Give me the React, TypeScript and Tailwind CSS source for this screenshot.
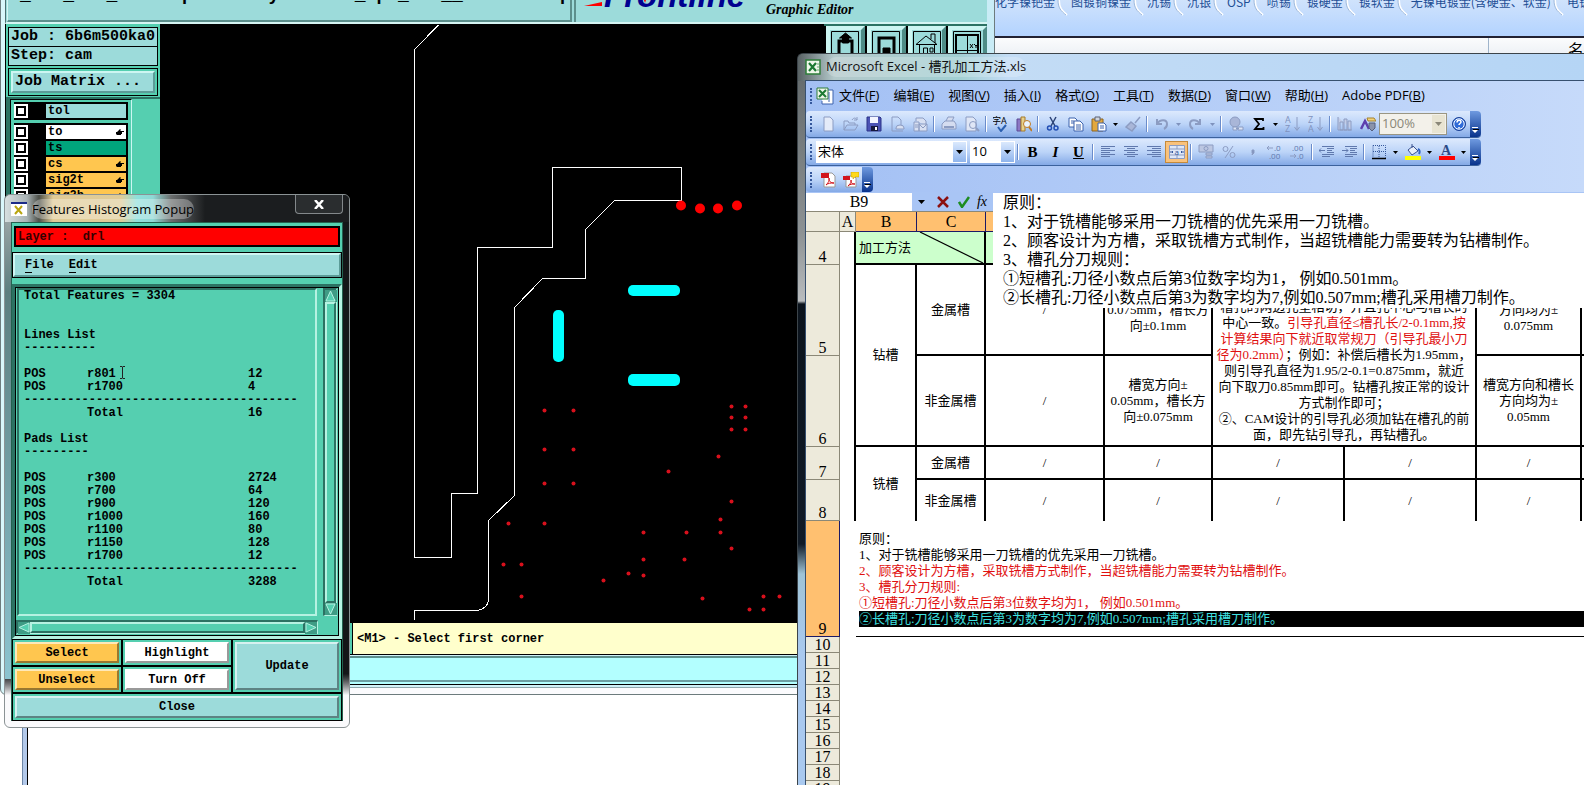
import React from "react";

type Layer = { name: string; color: string; hand: boolean };

const layers: Layer[] = [
  { name: "to", color: "bg-white", hand: true },
  { name: "ts", color: "bg-[#00a57c]", hand: false },
  { name: "cs", color: "bg-[#ffc64f]", hand: true },
  { name: "sig2t", color: "bg-[#ffc64f]", hand: true },
  { name: "sig2b", color: "bg-[#ffc64f]", hand: true },
];

const linesList = [
  ["r801", "12"],
  ["r1700", "4"],
];

const padsList = [
  ["r300", "2724"],
  ["r700", "64"],
  ["r900", "120"],
  ["r1000", "160"],
  ["r1100", "80"],
  ["r1150", "128"],
  ["r1700", "12"],
];

// drill hits, board coordinates
const holes = [
  [544, 410], [573, 410], [544, 449], [573, 449], [544, 483], [573, 483],
  [508, 523], [544, 523], [731, 406], [745, 406], [731, 417], [745, 417],
  [731, 429], [745, 429], [718, 456], [668, 471], [731, 501], [720, 519],
  [643, 532], [686, 532], [720, 532], [731, 548], [643, 559], [684, 559],
  [503, 564], [521, 564], [628, 573], [643, 575], [603, 580], [521, 596],
  [702, 598], [763, 596], [779, 596], [749, 609], [763, 609],
];

const sheetTabs = [
  "化学镍钯金", "图镀铜镍金", "沉锡", "沉银", "OSP", "喷锡", "镀硬金", "镀软金",
  "无镍电镀金(含硬金、软金)", "电镀",
];

const menus = [
  ["文件", "F"], ["编辑", "E"], ["视图", "V"], ["插入", "I"], ["格式", "O"],
  ["工具", "T"], ["数据", "D"], ["窗口", "W"], ["帮助", "H"], ["Adobe PDF", "B"],
];

const bevel =
  "border-2 border-t-[#cdf6f2] border-l-[#cdf6f2] border-b-[#5c9c98] border-r-[#5c9c98]";
const monoFont = "font-['Liberation_Mono',monospace]";
const songFont = "font-['Liberation_Serif','Noto_Sans_CJK_SC',serif]";
const uiFont = "font-['Open_Sans','Noto_Sans_CJK_SC',sans-serif]";

/* ---------- CAM editor ---------- */

const Hand = () => (
  <svg width="8" height="8" viewBox="0 0 8 8" className="mr-[2px]">
    <path d="M0 4h1l3-3 1 1-1 1h4v1H6v2H5v1H1L0 6z" fill="#000" />
  </svg>
);

const LayerRow: React.FC<{ layer: Layer }> = ({ layer }) => (
  <div className="flex h-4 bg-black pb-[2px]">
    <label className="flex w-[14px] items-center justify-center bg-white">
      <input
        type="checkbox"
        aria-label={layer.name}
        className="size-[10px] appearance-none border-2 border-black bg-white"
      />
    </label>
    <div className="w-[18px]" />
    <div className={`flex flex-1 items-center justify-between pl-[2px] ${layer.color}`}>
      <span className="text-xs leading-[14px] font-bold">{layer.name}</span>
      {layer.hand && <Hand />}
    </div>
  </div>
);

const Board = () => (
  <svg viewBox="160 24 664 599" className="h-full w-full bg-black" preserveAspectRatio="xMinYMin slice">
    <g fill="none" stroke="#fff" strokeWidth="1" shapeRendering="crispEdges">
      <path d="M438.5 25 414.5 49.5V557.5H451.5V493.5H477.5V247.5H552.5V167.5H681.5V200.5H614.5L585.5 229.5V278.5H542.5L514.5 307.5V495.5L488.5 520.5V600Q487 609 477.5 610.5H414.5V620" />
    </g>
    <g fill="#f00">
      <circle cx="681" cy="205.5" r="5" />
      <circle cx="700" cy="208.5" r="5" />
      <circle cx="718" cy="208.5" r="5" />
      <circle cx="737" cy="205.5" r="5" />
    </g>
    <g fill="#0ff">
      <rect x="628" y="285" width="52" height="11" rx="5" />
      <rect x="628" y="374" width="52" height="12" rx="5" />
      <rect x="553" y="310" width="11" height="52" rx="5" />
    </g>
    <g fill="#d8101c">
      {holes.map(([x, y]) => (
        <circle key={`${x}-${y}`} cx={x + 0.5} cy={y + 0.5} r="2" />
      ))}
    </g>
  </svg>
);

const ToolButton: React.FC<{ label: string; children: React.ReactNode }> = ({ label, children }) => (
  <button
    aria-label={label}
    className="h-[60px] flex-1 border-4 border-t-[#cdf6f2] border-r-[#4e8c86] border-b-[#4e8c86] border-l-[#cdf6f2] bg-[#9cdbda]"
  >
    <svg viewBox="0 0 30 52" className="block h-[52px] w-[30px]" fill="none" stroke="#000" strokeWidth="1">
      <path d="M1.500 51V1.500H28.500V51" />
      {children}
    </svg>
  </button>
);

const CamEditor = () => (
  <section
    className={`absolute top-[-20px] left-0 flex h-[715px] w-[995px] flex-col rounded-b-md border border-[#6d7b7d] bg-linear-to-r from-[#d9f7fb] to-[#c9ecf6] pr-[7px] pl-1 text-black ${monoFont}`}
  >
    <div className="flex h-[43px] border-b-2 border-l border-b-[#d5f5f3] border-l-[#4d6f72] bg-[#9cdbda]">
      <div className="ml-px flex-1 overflow-hidden border-r-2 border-b-2 border-l border-r-[#5c8f8c] border-b-[#5c8f8c] border-l-[#d5f5f3] pt-[3px] pl-3">
        <pre className="font-[inherit] text-lg leading-[22px] font-bold">
          {"_   _   _      p       y       _ p _   __         p"}
        </pre>
      </div>
      <div className="ml-[2px] flex w-[413px] border-l-2 border-l-[#5c8f8c] pt-1 pl-2">
        <svg width="170" height="26" viewBox="0 0 170 26" className="mt-[-2px]">
          <path d="M0 23 18 19V23z" fill="#f00" />
          <text
            x="20"
            y="24"
            fontSize="33"
            fontWeight="bold"
            fontStyle="italic"
            fontFamily="Liberation Sans, sans-serif"
            fill="#000090"
          >
            Frontline
          </text>
          <path d="M57 8h8l-4 12z" fill="#f00" />
        </svg>
        <span className="mt-[15px] ml-3 font-['Liberation_Serif',serif] text-sm leading-5 font-bold italic">
          Graphic Editor
        </span>
      </div>
    </div>

    <div className="flex h-[599px]">
      <aside className="flex w-[155px] flex-col border-l border-black bg-[#55cfb0] pt-[3px]">
        <div className="ml-[2px] mr-[2px] border border-black bg-[#9cdbda] text-[15px] font-bold">
          <div className="h-[19px] border-b border-black pl-[2px] leading-[17px]">Job : 6b6m500ka0</div>
          <div className="h-[18px] pl-[2px] leading-[17px]">Step: cam</div>
        </div>
        <div className="mt-[2px] mr-[2px] ml-[2px] border border-black p-[2px]">
          <button className={`block w-full bg-[#9cdbda] pl-[2px] text-left text-[15px] leading-[18px] font-bold ${bevel}`}>
            Job Matrix ...
          </button>
        </div>
        <div className="mt-px flex flex-1 border-t-2 border-l-4 border-[#2c7263]">
          <div className="w-[122px] border border-black border-r-[#cdf6f2] p-px pt-[2px] pr-[3px] pl-[3px]">
            <div className="border-r-2 border-black bg-black pt-[2px]">
              <LayerRow layer={{ name: "tol", color: "bg-[#9cdbda]", hand: false }} />
            </div>
            <div className="mt-[3px] border-r-2 border-black bg-black pt-[2px]">
              {layers.map((layer) => (
                <LayerRow key={layer.name} layer={layer} />
              ))}
            </div>
          </div>
        </div>
      </aside>
      <div className="min-w-0 flex-1 bg-black">
        <Board />
      </div>
      <div className="flex w-[163px] gap-[2px] border-t-2 border-[#2c7263] bg-black pl-[2px]">
        <ToolButton label="Load">
          <path d="M9 50V11h4M22 50V11h-4" strokeWidth="3" />
          <path d="M15.500 3l-6 5h3v5h6V8h3z" fill="#000" />
        </ToolButton>
        <ToolButton label="Save">
          <path d="M8 26V8h15v18z" strokeWidth="3" />
          <path d="M12 18h7v8h-7z" fill="#000" />
        </ToolButton>
        <ToolButton label="Home">
          <path d="M4 14.500 14 6 25 14.500z M7.500 15v14M22.500 15v14M19 9V4h4v9" />
          <path d="M11.500 18h4v8h-4zM18 18h3v4h-3z" />
        </ToolButton>
        <ToolButton label="XY view">
          <path d="M4 5h22v28H4z" strokeWidth="2" />
          <path d="M15.500 5v28M4 20.500h22" />
          <path d="m18 14 3 4m0-4-3 4M22 14l2 2 2-2m-2 2v2" />
        </ToolButton>
      </div>
    </div>

    <div className="flex h-8 border-b border-black bg-black">
      <div className="w-[347px] border-r border-[#55cfb0] bg-[#55cfb0]" />
      <div className="ml-px flex flex-1 items-center bg-[#ffffcc] pl-1 text-xs font-bold">
        &lt;M1&gt; - Select first corner
      </div>
    </div>
    <div className="mt-px h-[26px] border-y-2 border-t-[#5c8f8c] border-b-[#6d9fa3] bg-[#b3ffff]" />
    <div className="h-[3px] border-b border-black bg-[#b3ffff]" />
    <div className="mt-[2px] flex-1 border-t border-[#8fa9ad] bg-[#fbfbfd]" />
  </section>
);

/* ---------- histogram popup ---------- */

const Dashes: React.FC<{ count: number }> = ({ count }) => (
  <tr>
    <td colSpan={3}>{"-".repeat(count)}</td>
  </tr>
);

const HistoRow: React.FC<{ kind?: string; name?: string; value?: string }> = ({
  kind = "",
  name = "",
  value = "",
}) => (
  <tr className="h-[13px]">
    <td>{kind}</td>
    <td>{name}</td>
    <td>{value}</td>
  </tr>
);

const PopupButton: React.FC<{ label: string; color: string; tall?: boolean }> = ({ label, color, tall }) => (
  <div className={`border border-black bg-[#55cfb0] p-[2px] ${tall ? "row-span-2" : ""}`}>
    <button
      className={`block h-full w-full border-2 border-t-white/60 border-r-black/40 border-b-black/40 border-l-white/60 text-xs leading-[18px] font-bold ${color}`}
    >
      {label}
    </button>
  </div>
);

const Triangle: React.FC<{ d: string }> = ({ d }) => (
  <svg width="12" height="12" viewBox="0 0 12 12" className="shrink-0 bg-[#3f9c85]">
    <path d={d} fill="#55cfb0" stroke="#b6f2e2" strokeWidth="1" />
  </svg>
);

const HistogramPopup = () => (
  <section
    className={`absolute top-[194px] left-[4px] flex h-[534px] w-[346px] flex-col overflow-hidden rounded-md border border-[#8b9395] bg-linear-to-b from-[#141618] from-90% to-[#fafafc] to-94% px-[6px] pb-[6px] ${monoFont}`}
  >
    <div className="absolute top-0 bottom-12 left-0 w-[7px] bg-linear-to-b from-[#9aa4a6] from-5% via-[#5c7f80] via-20% to-[#8cc4d0]" />
    <header
      className={`relative -mx-[6px] flex h-7 items-center bg-[linear-gradient(to_right,#d7dfe0_0px,#a9b3b5_22px,#4c4f48_34px,#e0cb96_48px,#e0cc98_116px,#8fe0dc_132px,#8fd8d4_148px,#6b6e6e_166px,#1b1d1f_200px)] px-[6px] text-black ${uiFont}`}
    >
      <svg width="16" height="14" viewBox="0 0 16 14" className="mr-[5px]">
        <path d="M0 0h16v14H0z" fill="#fff" />
        <path d="M0 0h16v2H0z" fill="#1b2b88" />
        <path d="M4 4l7 8M11 4l-7 8" stroke="#b8a510" strokeWidth="2" />
      </svg>
      <h2 className="rounded-full bg-white/30 text-[13px] leading-5">Features Histogram Popup</h2>
      <button
        aria-label="Close window"
        className="ml-auto flex h-[19px] w-12 items-center justify-center self-start rounded-b-sm border border-t-0 border-[#83888b] bg-[#2a2d2f]"
      >
        <svg width="10" height="9" viewBox="0 0 10 9" stroke="#fff" strokeWidth="2.500">
          <path d="M1 0l8 9M9 0L1 9" />
        </svg>
      </button>
    </header>

    <div className="relative flex flex-1 flex-col border border-[#24614f] bg-[#55cfb0] text-xs font-bold">
      <div className="m-[2px] mt-[3px] flex h-[21px] items-center border-2 border-black bg-[#f00] pl-[2px] whitespace-pre text-[#330000]">
        {"Layer :  drl"}
      </div>
      <nav className="mt-[3px] mb-[6px] border border-black">
        <div className={`flex h-[24px] items-center gap-[15px] bg-[#9cdbda] pl-[10px] ${bevel}`}>
          <a href="#file"><span className="border-b border-black">F</span>ile</a>
          <a href="#edit"><span className="border-b border-black">E</span>dit</a>
        </div>
      </nav>

      <div className="border-[3px] border-t-[#2c7263] border-r-[#b6f2e2] border-b-[#b6f2e2] border-l-[#2c7263]">
        <div className="h-[349px] border border-black pr-px">
          <div className="flex h-[328px] gap-[6px]">
            <div className="ml-px flex-1 border-2 border-t-[#2c7263] border-r-[#b6f2e2] border-b-[#b6f2e2] border-l-[#2c7263] pl-[5px]">
              <table className="w-full table-fixed border-separate border-spacing-0 whitespace-nowrap leading-[13px] [&_td]:p-0">
                <colgroup>
                  <col className="w-[63px]" />
                  <col className="w-[161px]" />
                  <col />
                </colgroup>
                <tbody>
                  <tr><td colSpan={3}>Total Features = 3304</td></tr>
                  <HistoRow />
                  <HistoRow />
                  <tr><td colSpan={3}>Lines List</td></tr>
                  <Dashes count={10} />
                  <HistoRow />
                  {linesList.map(([name, value]) => (
                    <HistoRow key={name} kind="POS" name={name} value={value} />
                  ))}
                  <Dashes count={38} />
                  <HistoRow name="Total" value="16" />
                  <HistoRow />
                  <tr><td colSpan={3}>Pads List</td></tr>
                  <Dashes count={9} />
                  <HistoRow />
                  {padsList.map(([name, value]) => (
                    <HistoRow key={name} kind="POS" name={name} value={value} />
                  ))}
                  <Dashes count={38} />
                  <HistoRow name="Total" value="3288" />
                </tbody>
              </table>
            </div>
            <div className="flex w-[14px] flex-col border-2 border-r border-b border-t-[#2c7263] border-r-[#b6f2e2] border-b-[#b6f2e2] border-l-[#2c7263]">
              <Triangle d="M5.500 1 1 11H10z" />
              <div className="w-[11px] flex-1 border-2 border-t-[#b6f2e2] border-r-[#2c7263] border-b-[#2c7263] border-l-[#b6f2e2]" />
              <Triangle d="M5.500 11 1 1H10z" />
            </div>
          </div>
          <div className="mt-1 mr-[19px] flex h-[14px] border-2 border-r border-b border-t-[#2c7263] border-r-[#b6f2e2] border-b-[#b6f2e2] border-l-[#2c7263]">
            <Triangle d="M1 5.500 11 1V10z" />
            <div className="h-[11px] flex-1 border-2 border-t-[#b6f2e2] border-r-[#2c7263] border-b-[#2c7263] border-l-[#b6f2e2]" />
            <Triangle d="M11 5.500 1 1V10z" />
          </div>
        </div>
      </div>

      <div className="grid flex-1 grid-cols-3 grid-rows-[27px_27px_27px] bg-black">
        <PopupButton label="Select" color="bg-[#ffc64f]" />
        <PopupButton label="Highlight" color="bg-white" />
        <PopupButton label="Update" color="bg-[#9cdbda]" tall />
        <PopupButton label="Unselect" color="bg-[#ffc64f]" />
        <PopupButton label="Turn Off" color="bg-white" />
        <div className="col-span-3 grid">
          <PopupButton label="Close" color="bg-[#9cdbda]" />
        </div>
      </div>
    </div>

    {/* I-beam pointer */}
    <svg width="7" height="13" viewBox="0 0 7 13" className="absolute top-[171px] left-[114px]" fill="none" stroke="#222">
      <path d="M1 .5h2l.5 1 .5-1h2M3.500 1v11M1 12.500h2l.5-1 .5 1h2" />
    </svg>
  </section>
);

/* ---------- Excel ---------- */

const Grip = () => (
  <div className="mx-1 h-4 w-[2px] shrink-0 border-l-2 border-dotted border-[#34579c]" />
);

const Sep = () => (
  <div className="mx-[2px] h-4 w-[2px] shrink-0 border-r border-l border-r-white border-l-[#6a8ccb]" />
);

const Cap: React.FC = () => (
  <button
    aria-label="Toolbar options"
    className="ml-auto flex h-full w-[11px] shrink-0 items-end justify-center rounded-r-sm bg-linear-to-b from-[#6f9ae0] to-[#08328c] pb-[3px]"
  >
    <svg width="7" height="7" viewBox="0 0 7 7">
      <path d="M0 0h6v1H0zM0 3h6L3 6z" fill="#fff" />
      <path d="M1 2h6v1H1z" fill="#000" />
    </svg>
  </button>
);

const Ico: React.FC<{ label: string; children: React.ReactNode; active?: boolean }> = ({ label, children, active }) => (
  <button
    aria-label={label}
    className={`flex h-[22px] w-[23px] shrink-0 items-center justify-center ${
      active ? "border border-[#c58a3a] bg-[#f9c27c]" : ""
    }`}
  >
    <svg width="16" height="16" viewBox="0 0 16 16" fill="none" stroke="#8c9cc2" strokeWidth="1">
      {children}
    </svg>
  </button>
);

const Drop: React.FC<{ label: string; gray?: boolean }> = ({ label, gray }) => (
  <button aria-label={label} className="flex h-[22px] w-[11px] shrink-0 items-center justify-center">
    <svg width="5" height="3" viewBox="0 0 5 3">
      <path d="M0 0h5L2.500 3z" fill={gray ? "#7f92bd" : "#000"} />
    </svg>
  </button>
);

const Combo: React.FC<{ label: string; value: string; size: string; muted?: boolean }> = ({
  label,
  value,
  size,
  muted,
}) => (
  <div
    className={`relative flex h-[22px] shrink-0 items-center ${size} ${
      muted ? "border border-[#9a9683] bg-[#f3f1ea]" : "bg-white"
    }`}
  >
    <select
      aria-label={label}
      className={`h-full w-full appearance-none pl-[2px] text-[13px] ${muted ? "text-[#8a8778]" : "text-black"}`}
    >
      <option>{value}</option>
    </select>
    <div
      className={`pointer-events-none absolute inset-y-px right-px flex w-[13px] items-center justify-center ${
        muted ? "bg-[#e8e4d2]" : "bg-linear-to-b from-[#dbe9fd] to-[#8fb4ec]"
      }`}
    >
      <svg width="7" height="4" viewBox="0 0 7 4">
        <path d="M0 0h7L3.500 4z" fill={muted ? "#8a8778" : "#000"} />
      </svg>
    </div>
  </div>
);

const ExcelMark = () => (
  <svg width="16" height="16" viewBox="0 0 16 16" className="shrink-0">
    <path d="M1 1h14v14H1z" fill="#eef7ea" stroke="#2e7d3a" strokeWidth="1.500" />
    <path d="M4 4l7 8M11 4l-7 8" stroke="#1d7a33" strokeWidth="2.200" />
    <path d="M12 5h2M12 8h2M12 11h2" stroke="#69a873" />
  </svg>
);

const AlignLines: React.FC<{ d: string }> = ({ d }) => <path d={d} stroke="#6079ad" />;

const bar =
  "flex h-[27px] w-[675px] items-center rounded-sm border-b border-[#3b619c] bg-linear-to-b from-[#dce9fd] via-[#bcd4f8] to-[#84a9e6]";

const StandardBar = () => (
  <div className={bar}>
    <Grip />
    <Ico label="New"><path d="M4 1h6l3 3v11H4z" fill="#e4ebf9" /></Ico>
    <Ico label="Open"><path d="M1 14V5h4l1 2h6v2M1 14l3-5h11l-3 5zM9 4c2-3 4-2 5 0m0-3v3h-3" /></Ico>
    <Ico label="Save">
      <path d="M1 1h13l1 1v13H1z" fill="#4b53b5" stroke="#2b3287" />
      <path d="M4 1h8v6H4z" fill="#f2f4ff" stroke="none" />
      <path d="M5 10h7v5H5z" fill="#15183f" stroke="none" />
      <path d="M9 11h2v3H9z" fill="#fff" stroke="none" />
    </Ico>
    <Ico label="Permission"><path d="M3 1h6l3 3v5M3 1v14h5" /><path d="M7 12a4 3 0 0 1 8 0v1H7zM8 15h6" fill="#d8e0f2" /></Ico>
    <Ico label="Mail"><path d="M4 5V2h7l3 3v4M2 6h5v9H2zM7 8h8v7H7z" fill="#d8e0f2" /><path d="m7 8 4 4 4-4M3 9h3M3 11h3" /></Ico>
    <Sep />
    <Ico label="Print"><path d="M1 8l3-3h9l2 3v5H1zM5 5l2-4h6l-2 4" fill="#d4dcf0" /><path d="M3 11h10" strokeWidth="2" /></Ico>
    <Ico label="Preview"><path d="M2 1h7l3 3v11H2z" fill="#dfe6f6" /><circle cx="9" cy="9" r="3.500" /><path d="m12 12 3 3" strokeWidth="2" /></Ico>
    <Sep />
    <Ico label="Spelling">
      <text x="-1" y="8" fontSize="9" fill="#000" stroke="none">字</text>
      <text x="8" y="8" fontSize="9" fill="#000" stroke="none">A</text>
      <path d="m5 11 3 4 5-6" stroke="#2a5fb0" strokeWidth="2" />
    </Ico>
    <Ico label="Research">
      <path d="M1 3h4v12H1z" fill="#8c78c4" stroke="#5d4a93" />
      <path d="M5 1h4v14H5z" fill="#e7d08c" stroke="#a57a28" />
      <circle cx="11" cy="8" r="3.500" fill="#eaf3ff" stroke="#c07a22" />
      <path d="m13 11 3 4" stroke="#c07a22" strokeWidth="2" />
    </Ico>
    <Sep />
    <Ico label="Cut">
      <path d="M5 1l5 9M11 1l-5 9" stroke="#2c4377" strokeWidth="1.500" />
      <circle cx="4.500" cy="12" r="2" stroke="#234fb4" strokeWidth="1.500" />
      <circle cx="11" cy="12" r="2" stroke="#234fb4" strokeWidth="1.500" />
    </Ico>
    <Ico label="Copy">
      <path d="M1 2h6l2 2v7H1z" fill="#fff" stroke="#3c62ad" />
      <path d="M6 5h6l3 3v7H6z" fill="#fff" stroke="#3c62ad" />
      <path d="M3 5h3M3 7h3M8 9h5M8 11h5M8 13h5" stroke="#3c62ad" />
    </Ico>
    <Ico label="Paste">
      <path d="M1 3h11v12H1z" fill="#e3a83e" stroke="#8c6420" />
      <path d="M4 1h5v4H4z" fill="#cfd4dd" stroke="#5c6374" />
      <path d="M7 7h6l2 2v6H7z" fill="#fff" stroke="#3c62ad" />
      <path d="M9 10h4M9 12h4" stroke="#3c62ad" />
    </Ico>
    <Drop label="Paste options" />
    <Ico label="Format painter"><path d="m15 1-5 6M6 6l5 4-4 5-6-4z" fill="#a9b6d8" strokeWidth="1.500" /></Ico>
    <Sep />
    <Ico label="Undo"><path d="M3 3v5h5M3 8c3-5 10-5 10 0 0 2-1 4-3 5" strokeWidth="2" /></Ico>
    <Drop label="Undo list" gray />
    <Ico label="Redo"><path d="M12 3v5H7M12 8C9 3 2 3 2 8c0 2 1 4 3 5" strokeWidth="2" /></Ico>
    <Drop label="Redo list" gray />
    <Sep />
    <Ico label="Hyperlink"><circle cx="7" cy="6" r="5" fill="#a9b6d8" /><path d="M5 11h4v3H5zM10 11h5v3h-5zM8 12.500h3" fill="#dde5f6" /></Ico>
    <Ico label="AutoSum"><path d="M12 5V3H4l4 5-4 5h8.500v-2" stroke="#000" strokeWidth="1.800" /></Ico>
    <Drop label="AutoSum list" />
    <Ico label="Sort ascending">
      <text x="0" y="7" fontSize="9" fill="#7f92bd" stroke="none">A</text>
      <text x="0" y="16" fontSize="9" fill="#7f92bd" stroke="none">Z</text>
      <path d="M12 1v13M9.500 11l2.500 3.500 2.500-3.500" />
    </Ico>
    <Ico label="Sort descending">
      <text x="0" y="7" fontSize="9" fill="#7f92bd" stroke="none">Z</text>
      <text x="0" y="16" fontSize="9" fill="#7f92bd" stroke="none">A</text>
      <path d="M12 1v13M9.500 11l2.500 3.500 2.500-3.500" />
    </Ico>
    <Sep />
    <Ico label="Chart"><path d="M1 1v13h14M3 6h3v8H3zM7 3h3v11H7zM11 5h3v9h-3z" fill="#c3cde8" /></Ico>
    <Ico label="Drawing">
      <path d="m1 13 4-8 4 8" stroke="#5d3fae" strokeWidth="2.500" />
      <path d="M7 2h7l2 3H8z" fill="#f2d27a" stroke="#a5822d" />
      <path d="M9 7h6v5l-3 3-3-3z" fill="#8a93ab" stroke="#555f7d" />
    </Ico>
    <Combo label="Zoom" value="100%" size="w-[68px]" muted />
    <Ico label="Help">
      <circle cx="8" cy="8" r="6.500" fill="#2f6bd8" stroke="#1a3f93" />
      <circle cx="8" cy="8" r="5.200" stroke="#fff" />
      <path d="M6 6.500c0-3 4-3 4-.5 0 1.500-2 1.500-2 3M8 11v1.500" stroke="#fff" strokeWidth="1.500" />
    </Ico>
    <Cap />
  </div>
);

const FormatBar = () => (
  <div className={bar}>
    <Grip />
    <div className="flex gap-[3px]">
      <Combo label="Font" value="宋体" size="w-[151px]" />
      <Combo label="Font size" value="10" size="w-[45px]" />
    </div>
    <Sep />
    <button className="h-[22px] w-[23px] font-['Liberation_Serif',serif] text-[15px] font-black">B</button>
    <button className="h-[22px] w-[23px] font-['Liberation_Serif',serif] text-[15px] font-bold italic">I</button>
    <button className="h-[22px] w-[23px] font-['Liberation_Serif',serif] text-[15px] font-bold underline">U</button>
    <Sep />
    <Ico label="Align left"><AlignLines d="M1 2.500h14M1 4.500h9M1 6.500h14M1 8.500h9M1 10.500h14M1 12.500h9" /></Ico>
    <Ico label="Centre"><AlignLines d="M1 2.500h14M4 4.500h8M1 6.500h14M4 8.500h8M1 10.500h14M4 12.500h8" /></Ico>
    <Ico label="Align right"><AlignLines d="M1 2.500h14M6 4.500h9M1 6.500h14M6 8.500h9M1 10.500h14M6 12.500h9" /></Ico>
    <Ico label="Merge and centre" active>
      <path d="M.5 1.500h15v13H.5zM.5 5h15M.5 11h15M8 1.500V5M8 11v3.500" fill="#dfe8f8" />
      <path d="M1 8h3m-1-1 1 1-1 1M15 8h-3m1-1-1 1 1 1" stroke="#34579c" />
      <text x="5.500" y="10.500" fontSize="8" fill="#34579c" stroke="none">a</text>
    </Ico>
    <Sep />
    <Ico label="Currency"><path d="M1 1h14v7H1zM8 9h6v2H8zM8 12h6v2H8z" fill="#bcc7e2" /><circle cx="8" cy="4.500" r="2" /></Ico>
    <Ico label="Percent"><circle cx="4.500" cy="5" r="2.500" /><circle cx="11.500" cy="11" r="2.500" /><path d="M12 2 4 14" /></Ico>
    <Ico label="Comma"><path d="M8 6h2v3l-2 2 .5-2H8z" fill="#7f92bd" /></Ico>
    <Ico label="Increase decimal">
      <path d="M0 4h6M2 2 0 4l2 2" />
      <text x="7" y="7" fontSize="8" fill="#6079ad" stroke="none">.0</text>
      <text x="2" y="15" fontSize="8" fill="#6079ad" stroke="none">.00</text>
    </Ico>
    <Ico label="Decrease decimal">
      <text x="2" y="7" fontSize="8" fill="#6079ad" stroke="none">.00</text>
      <text x="7" y="15" fontSize="8" fill="#6079ad" stroke="none">.0</text>
      <path d="M0 12h6M4 10l2 2-2 2" />
    </Ico>
    <Sep />
    <Ico label="Decrease indent"><AlignLines d="M3 2.500h12M8 4.500h7M8 6.500h5M8 8.500h7M3 10.500h12M3 12.500h8M0 6.500h6M2 4.500l-2 2 2 2" /></Ico>
    <Ico label="Increase indent"><AlignLines d="M3 2.500h12M8 4.500h7M8 6.500h5M8 8.500h7M3 10.500h12M3 12.500h8M0 6.500h6M4 4.500l2 2-2 2" /></Ico>
    <Sep />
    <Ico label="Borders">
      <path d="M2 1.500h12.500v12M2 1.500v12M8 2v12M2 7.500h12" strokeDasharray="1 1" stroke="#34579c" />
      <path d="M1 14.500h14" stroke="#000" strokeWidth="1.500" />
    </Ico>
    <Drop label="Border list" />
    <Ico label="Fill colour">
      <path d="m3 6 5-4 5 5-6 4zM7 4V0" fill="#e8eef9" stroke="#3a5290" />
      <path d="M13 5c2 1 2 3 1 5" stroke="#2f62c4" strokeWidth="2" />
      <path d="M0 12h16v4H0z" fill="#ff0" stroke="none" />
    </Ico>
    <Drop label="Fill colour list" />
    <Ico label="Font colour">
      <text x="2" y="11" fontSize="14" fontWeight="bold" fontFamily="Liberation Serif, serif" fill="#2c4a86" stroke="none">A</text>
      <path d="M0 12h16v4H0z" fill="#f00" stroke="none" />
    </Ico>
    <Drop label="Font colour list" />
    <Cap />
  </div>
);

const PdfBar = () => (
  <div className="flex h-[25px] w-[66px] items-center rounded-sm bg-linear-to-b from-[#dce9fd] via-[#bcd4f8] to-[#84a9e6]">
    <Grip />
    <Ico label="Convert to PDF">
      <path d="M4 1h8l3 3v11H4z" fill="#fff" stroke="#999" />
      <path d="M1 1h8v5H1z" fill="#d2141c" stroke="none" />
      <path d="M6 13c3-3 4-6 3-7-1 3 2 5 5 5-3 0-6 0-8 2z" stroke="#d2141c" />
    </Ico>
    <Ico label="Convert and review">
      <path d="M3 4h8l2 2v9H3z" fill="#fff" stroke="#999" />
      <path d="M0 4h7v4H0z" fill="#d2141c" stroke="none" />
      <path d="M5 14c3-3 4-5 3-6-1 3 2 4 4 4-3 0-5 0-7 2z" stroke="#d2141c" />
      <path d="M8 0h8v5h-4l-2 2V5H8z" fill="#ffd91a" stroke="#b89500" strokeWidth=".5" />
    </Ico>
    <Cap />
  </div>
);

const RowHead: React.FC<{ n: number; height: string; active?: boolean }> = ({ n, height, active }) => (
  <th
    scope="row"
    className={`border-r border-b p-0 align-bottom text-base leading-[15px] font-normal ${height} ${
      active ? "border-[#1c1a66] bg-[#ffc070]" : "border-[#8b8877] bg-[#edeadb]"
    }`}
  >
    {n}
  </th>
);

// a bordered cell of the drawn table; `open` leaves the bottom edge off
const Cell: React.FC<React.TdHTMLAttributes<HTMLTableCellElement> & { open?: boolean }> = ({
  className = "",
  open,
  children,
  ...rest
}) => (
  <td
    className={`border-r-2 border-black p-0 text-center ${open ? "" : "border-b-2"} ${className}`}
    {...rest}
  >
    {children}
  </td>
);

const Sheet = () => (
  <table className={`w-full table-fixed border-separate border-spacing-0 bg-white text-[13px] leading-4 text-black ${songFont}`}>
    <colgroup>
      <col className="w-[34px]" />
      <col className="w-4" />
      <col className="w-[61px]" />
      <col className="w-[69px]" />
      <col className="w-[119px]" />
      <col className="w-[108px]" />
      <col className="w-[132px]" />
      <col className="w-[132px]" />
      <col className="w-[105px]" />
      <col />
    </colgroup>
    <thead>
      <tr className="h-5 text-base leading-4">
        <td className="border-r border-b border-[#8b8877] bg-[#edeadb] p-0" />
        <th className="border-r border-b border-[#8b8877] bg-[#edeadb] p-0 font-normal">A</th>
        <th className="border-r border-b border-[#1c1a66] bg-[#ffc070] p-0 font-normal">B</th>
        <th className="border-r border-b border-[#1c1a66] bg-[#ffc070] p-0 font-normal">C</th>
        <th colSpan={6} className="border-b border-[#1c1a66] bg-[#ffc070] p-0" />
      </tr>
    </thead>
    <tbody>
      <tr>
        <RowHead n={4} height="h-[33px]" />
        <td className="border-r-2 border-black p-0" />
        <td className="border-b-2 border-black bg-[#ccffcc] p-0 pl-[3px] whitespace-nowrap">加工方法</td>
        <Cell className="bg-[#ccffcc]">
          <svg viewBox="0 0 67 31" className="block h-[31px] w-full" preserveAspectRatio="none">
            <path d="M3 0 66 31" stroke="#000" strokeWidth="1.200" />
          </svg>
        </Cell>
        <Cell className="bg-[#ccffcc]" />
        <Cell className="bg-[#ccffcc]" />
        <Cell className="bg-[#ccffcc]" colSpan={2} />
        <Cell className="bg-[#ccffcc]" />
        <td className="border-b-2 border-black bg-[#ccffcc] p-0" />
      </tr>
      <tr>
        <RowHead n={5} height="h-[91px]" />
        <td className="border-r-2 border-black p-0" />
        <Cell rowSpan={2}>钻槽</Cell>
        <Cell>金属槽</Cell>
        <Cell>/</Cell>
        <Cell>槽宽方向±<br />0.075mm，槽长方<br />向±0.1mm</Cell>
        <Cell rowSpan={2} colSpan={2} className="pb-[2px] align-bottom whitespace-nowrap">
          槽孔的两边孔壁相切，并且孔中心与槽长的<br />
          中心一致。<span className="text-[#e01010]">引导孔直径≤槽孔长/2-0.1mm,按<br />
          计算结果向下就近取常规刀（引导孔最小刀<br />
          径为0.2mm）</span>；例如：补偿后槽长为1.95mm，<br />
          则引导孔直径为1.95/2-0.1=0.875mm，就近<br />
          向下取刀0.85mm即可。钻槽孔按正常的设计<br />
          方式制作即可；<br />
          ②、CAM设计的引导孔必须加钻在槽孔的前<br />
          面，即先钻引导孔，再钻槽孔。
        </Cell>
        <Cell>槽宽方向和槽长<br />方向均为±<br />0.075mm</Cell>
        <td className="border-b-2 border-black p-0" />
      </tr>
      <tr>
        <RowHead n={6} height="h-[91px]" />
        <td className="border-r-2 border-black p-0" />
        <Cell>非金属槽</Cell>
        <Cell>/</Cell>
        <Cell>槽宽方向±<br />0.05mm，槽长方<br />向±0.075mm</Cell>
        <Cell>槽宽方向和槽长<br />方向均为±<br />0.05mm</Cell>
        <td className="border-b-2 border-black p-0" />
      </tr>
      <tr>
        <RowHead n={7} height="h-[33px]" />
        <td className="border-r-2 border-black p-0" />
        <Cell rowSpan={2} open>铣槽</Cell>
        <Cell>金属槽</Cell>
        <Cell>/</Cell>
        <Cell>/</Cell>
        <Cell>/</Cell>
        <Cell>/</Cell>
        <Cell>/</Cell>
        <td className="border-b-2 border-black p-0" />
      </tr>
      <tr>
        <RowHead n={8} height="h-[41px]" />
        <td className="border-r-2 border-black p-0" />
        <Cell open>非金属槽</Cell>
        <Cell open>/</Cell>
        <Cell open>/</Cell>
        <Cell open>/</Cell>
        <Cell open>/</Cell>
        <Cell open>/</Cell>
        <td className="p-0" />
      </tr>
      <tr>
        <RowHead n={9} height="h-[116px]" active />
        <td className="p-0" />
        <td colSpan={8} className="border-b border-black p-0 pl-[3px] whitespace-nowrap">
          <p>原则：</p>
          <p>1、对于铣槽能够采用一刀铣槽的优先采用一刀铣槽。</p>
          <div className="text-[#e01010]">
            <p>2、顾客设计为方槽，采取铣槽方式制作，当超铣槽能力需要转为钻槽制作。</p>
            <p>3、槽孔分刀规则:</p>
            <p>①短槽孔:刀径小数点后第3位数字均为1， 例如0.501mm。</p>
          </div>
          <p className="bg-black text-[#3fe0e0]">②长槽孔:刀径小数点后第3为数字均为7,例如0.507mm;槽孔采用槽刀制作。</p>
        </td>
      </tr>
      {[10, 11, 12, 13, 14, 15, 16, 17, 18, 19].map((n) => (
        <tr key={n}>
          <RowHead n={n} height="h-4" />
          <td colSpan={9} className="p-0" />
        </tr>
      ))}
    </tbody>
  </table>
);

const ExcelWindow = () => (
  <section
    className={`absolute top-[53px] right-0 bottom-0 left-[797px] overflow-hidden rounded-tl-md border-t border-l border-[#3c444a] bg-[linear-gradient(#5f6668_0px,#8d9294_180px,#b9bcbe_247px,#0b131c_250px,#101a26_490px,#9fc3d6_520px,#a9c9ef_600px)] pl-[7px] ${uiFont}`}
  >
    <div className="absolute inset-x-0 top-0 h-[27px] bg-[linear-gradient(to_right,#596264_0px,#b4c9cb_36px,#a2cfd2_160px,#c3dcf5_210px,#b5d5f5_100%)]" />
    <header className="relative flex h-[26px] items-center text-[#111]">
      <ExcelMark />
      <h1 className="ml-[5px] rounded-full bg-white/20 text-[13px]">Microsoft Excel - 槽孔加工方法.xls</h1>
    </header>

    <div className="relative border-t border-l border-[#37506f] bg-linear-to-r from-[#a3c0f4] to-[#c6dafa]">
      <nav className="flex h-[30px] items-center text-[13px] whitespace-nowrap text-black">
        <Grip />
        <svg width="18" height="18" viewBox="0 0 18 18" className="mr-[5px]">
          <path d="M9 3h8v14H6v-3" fill="#fff" stroke="#3c62ad" />
          <path d="M1 1h11v11H1z" fill="#eef7ea" stroke="#2e7d3a" />
          <path d="M3 3l7 7M10 3l-7 7" stroke="#1d7a33" strokeWidth="2" />
          <path d="M13 5v10" stroke="#3c62ad" />
        </svg>
        <div className="flex gap-[14px]">
          {menus.map(([name, key]) => (
            <a key={key} href={`#${key}`}>
              {name}(<span className="underline">{key}</span>)
            </a>
          ))}
        </div>
      </nav>
      <div className="flex flex-col gap-px">
        <StandardBar />
        <FormatBar />
        <PdfBar />
      </div>
      <div className="flex h-5 items-center border-b border-[#8b8877] bg-[#a9c5f5]">
        <input
          aria-label="Name box"
          defaultValue="B9"
          className={`h-[18px] w-[106px] bg-white text-center text-base text-black ${songFont}`}
        />
        <button aria-label="Name list" className="flex w-[19px] justify-center">
          <svg width="7" height="4" viewBox="0 0 7 4"><path d="M0 0h7L3.500 4z" /></svg>
        </button>
        <button aria-label="Cancel" className="flex w-[24px] justify-center">
          <svg width="12" height="12" viewBox="0 0 12 12" stroke="#8c1010" strokeWidth="2.500"><path d="M1 1l10 10M11 1 1 11" /></svg>
        </button>
        <button aria-label="Enter" className="flex w-[18px] justify-center">
          <svg width="12" height="12" viewBox="0 0 12 12" fill="none" stroke="#1c8c20" strokeWidth="2.500"><path d="m1 6 3 5 7-10" /></svg>
        </button>
        <button aria-label="Insert function" className="w-[18px] font-['Liberation_Serif',serif] text-sm leading-4 italic">fx</button>
      </div>
      <Sheet />
      {/* expanded formula box, drops over the grid */}
      <div
        className={`absolute top-[112px] right-0 left-[187px] h-[115px] bg-white pl-[10px] text-base leading-[19px] whitespace-nowrap text-black ${songFont}`}
      >
        <p>原则：</p>
        <p>1、对于铣槽能够采用一刀铣槽的优先采用一刀铣槽。</p>
        <p>2、顾客设计为方槽，采取铣槽方式制作，当超铣槽能力需要转为钻槽制作。</p>
        <p>3、槽孔分刀规则：</p>
        <p>①短槽孔:刀径小数点后第3位数字均为1， 例如0.501mm。</p>
        <p>②长槽孔:刀径小数点后第3为数字均为7,例如0.507mm;槽孔采用槽刀制作。</p>
      </div>
    </div>
  </section>
);

/* ---------- workbook behind everything ---------- */

const BackWorkbook = () => (
  <section className="absolute top-[-8px] right-0 left-[994px] border-l border-[#5c7c9c] font-['Noto_Sans_CJK_SC',sans-serif]">
    <div className="h-[46px] overflow-hidden border-b-2 border-[#223] bg-linear-to-b from-[#d6e6fb] to-[#b3d3ff]">
      <div className="flex text-xs leading-5 whitespace-nowrap text-[#1f4f96]">
        {sheetTabs.map((tab) => (
          <a key={tab} href={`#${tab}`} className="flex items-end pr-[2px]">
            {tab}
            <svg width="14" height="16" viewBox="0 0 14 16" className="translate-y-1" fill="none">
              <path d="M4 0c0 8 3 11 8 15" stroke="#fff" strokeWidth="2" />
              <path d="M3 0c0 8 3 11 8 15" stroke="#9db9dd" />
            </svg>
          </a>
        ))}
      </div>
    </div>
    <div className="flex h-[26px] bg-linear-to-b from-[#fbfcfd] to-[#e6ebf1]">
      <div className="flex-1 border-r border-[#9fb4cb]" />
      <div className="w-[95px] pt-px text-right text-base leading-5 text-black">名</div>
    </div>
  </section>
);

const App: React.FC = () => {
  return (
    <main className="relative h-screen w-full overflow-hidden bg-white">
      {/* window peeking out below the popup */}
      <div className="absolute top-[690px] bottom-0 left-[22px] w-[6px] border-r border-l border-r-black border-l-[#6e87a8] bg-[#b3c9ea]" />
      <BackWorkbook />
      <CamEditor />
      <HistogramPopup />
      <ExcelWindow />
    </main>
  );
};

export default App;
